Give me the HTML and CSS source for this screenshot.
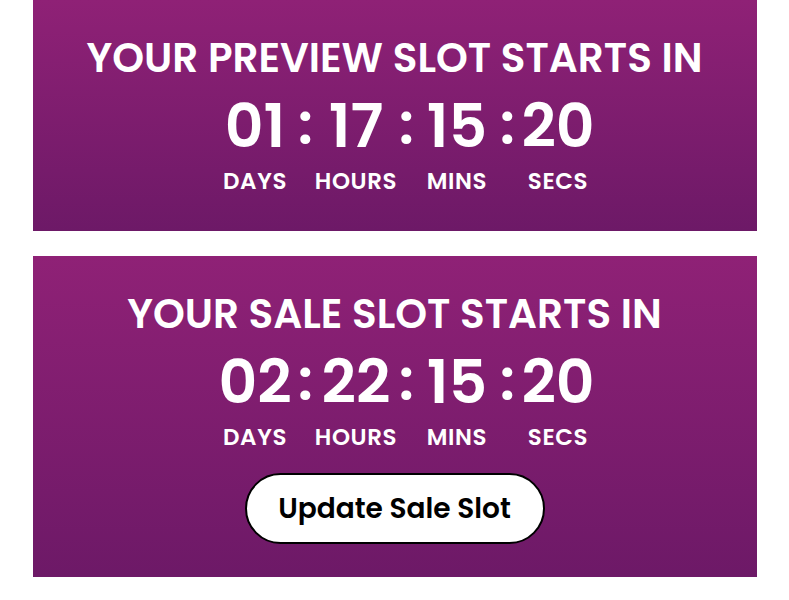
FILE: index.html
```html
<!DOCTYPE html>
<html>
<head>
<meta charset="utf-8">
<link rel="stylesheet" href="styles.css">
</head>
<body>
<main class="page">
  <section class="card card-preview">
    <h2 class="title">YOUR PREVIEW SLOT STARTS IN</h2>
    <div class="timer">
      <div class="unit"><span class="num">01</span><span class="label">DAYS</span></div>
      <span class="sep">:</span>
      <div class="unit"><span class="num">17</span><span class="label">HOURS</span></div>
      <span class="sep">:</span>
      <div class="unit"><span class="num">15</span><span class="label">MINS</span></div>
      <span class="sep">:</span>
      <div class="unit"><span class="num">20</span><span class="label">SECS</span></div>
    </div>
  </section>
  <section class="card card-sale">
    <h2 class="title">YOUR SALE SLOT STARTS IN</h2>
    <div class="timer">
      <div class="unit"><span class="num">02</span><span class="label">DAYS</span></div>
      <span class="sep">:</span>
      <div class="unit"><span class="num">22</span><span class="label">HOURS</span></div>
      <span class="sep">:</span>
      <div class="unit"><span class="num">15</span><span class="label">MINS</span></div>
      <span class="sep">:</span>
      <div class="unit"><span class="num">20</span><span class="label">SECS</span></div>
    </div>
    <button class="btn">Update Sale Slot</button>
  </section>
</main>
</body>
</html>
```
FILE: styles.css
```css
* { box-sizing: border-box; }
html, body { margin: 0; padding: 0; background: #fff; }
body {
  font-family: Poppins, Inter, "Noto Sans", sans-serif;
  color: #fff;
}
.page {
  width: 724px;
  margin: 0 auto;
  display: flex;
  flex-direction: column;
  gap: 25px;
}
.card {
  background: linear-gradient(180deg, #8f2176 0%, #6d1967 100%);
  display: flex;
  flex-direction: column;
  align-items: center;
}
.card-preview { height: 231px; padding-top: 32px; }
.card-sale { height: 321px; padding-top: 32px; }
.title {
  margin: 0;
  font-size: 40.5px;
  font-weight: 600;
  line-height: 52px;
}
.timer {
  display: flex;
  align-items: flex-start;
  margin-top: 7px;
  padding-left: 24px;
}
.unit {
  width: 74px;
  display: flex;
  flex-direction: column;
  align-items: center;
}
.num {
  font-size: 60px;
  font-weight: 600;
  line-height: 70px;
}
.label {
  font-size: 23px;
  font-weight: 600;
  line-height: 28px;
  letter-spacing: 0.6px;
  margin-top: 6px;
}
.sep {
  width: 27px;
  text-align: center;
  font-size: 58px;
  font-weight: 600;
  line-height: 66px;
}
.btn {
  margin-top: 22px;
  width: 300px;
  height: 71px;
  border: 2px solid #000;
  border-radius: 36px;
  background: #fff;
  color: #000;
  font-family: Poppins, Inter, "Noto Sans", sans-serif;
  font-size: 28px;
  font-weight: 600;
}
```
